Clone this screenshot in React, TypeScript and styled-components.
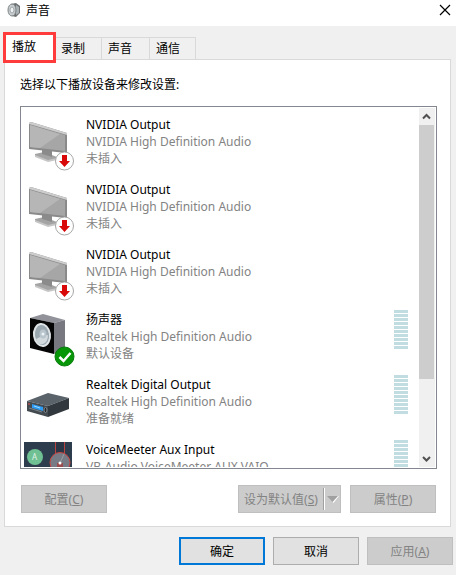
import React from "react";
import styled, { createGlobalStyle, css } from "styled-components";

const Global = createGlobalStyle`
  *, *::before, *::after { box-sizing: border-box; }
  body { margin: 0; background: #f0f0f0; }
  body, button {
    font-family: "Noto Sans", "Noto Sans CJK SC", sans-serif;
    font-size: 12px;
    line-height: 17px;
    color: #000;
  }
  button { margin: 0; padding: 0; }
  h1, p, ul { margin: 0; padding: 0; font: inherit; }
  svg { display: block; }
`;

const Dialog = styled.main`
  display: flex;
  flex-direction: column;
  min-height: 100vh;
  background: #f0f0f0;
`;

const TitleBar = styled.header`
  display: flex;
  align-items: center;
  gap: 5px;
  height: 26px;
  padding: 0 4px 6px 5px;
  background: #fff;
`;

const Title = styled.h1`
  flex: 1;
`;

const CloseButton = styled.button`
  display: grid;
  place-items: center;
  width: 14px;
  height: 14px;
  border: 0;
  background: none;
`;

const Tabs = styled.div`
  display: flex;
  align-items: flex-end;
  height: 33px;
  padding-left: 3px;
`;

const Tab = styled.button<{ $width: number }>`
  width: ${(p) => p.$width}px;
  height: 22px;
  padding-left: 6px;
  border: 1px solid #d9d9d9;
  border-width: 1px 0 0 1px;
  background: #f0f0f0;
  text-align: left;

  &:last-child {
    border-right-width: 1px;
  }

  &[aria-selected="true"] {
    position: relative;
    z-index: 1;
    height: 31px;
    margin: 0 -2px -4px 0;
    padding-bottom: 2px;
    border: 3px solid #ff3b3b;
    background: #fff;
  }
`;

const Panel = styled.section`
  display: flex;
  flex-direction: column;
  margin: 0 5px 0 4px;
  padding: 16px 13px 13px 15px;
  border: 1px solid #d9d9d9;
  background: #fff;
`;

const Prompt = styled.p`
  margin-bottom: 13px;
`;

const ListFrame = styled.div`
  display: flex;
  height: 363px;
  border: 1px solid #828790;
  padding-right: 1px;
  background: #fff;
`;

const DeviceList = styled.ul`
  flex: 1;
  min-width: 0;
  overflow: hidden;
  list-style: none;
  margin-bottom: 1px;
`;

const Device = styled.li`
  display: flex;
  align-items: flex-start;
  gap: 14px;
  height: 65px;
  padding: 9px 11px 0 3px;
`;

const DeviceIcon = styled.svg`
  flex: none;
  margin-top: 1px;
`;

const DeviceText = styled.div`
  flex: 1;
  min-width: 0;
  white-space: nowrap;
`;

const Detail = styled.p`
  color: #838383;
`;

const Meter = styled.div`
  flex: none;
  width: 14px;
  height: 39px;
  margin-top: -1px;
  background: repeating-linear-gradient(#c1dde2 0 3px, #fff 3px 4px);
`;

const ScrollBar = styled.div`
  display: flex;
  flex-direction: column;
  width: 16px;
  margin: 1px 0;
  background: #f0f0f0;
`;

const ScrollButton = styled.button`
  display: grid;
  place-items: center;
  width: 15px;
  height: 17px;
  border: 0;
  background: none;
`;

const Track = styled.div`
  flex: 1;
`;

const Thumb = styled.div`
  width: 15px;
  height: 78%;
  background: #cdcdcd;
`;

const Actions = styled.div`
  display: flex;
  gap: 9px;
  padding: 16px 1px 0;
`;

const Spacer = styled.div`
  flex: 1;
`;

const disabledLook = css`
  border: 1px solid #bfbfbf;
  background: #cccccc;
  color: #838383;
`;

const Button = styled.button<{ $primary?: boolean }>`
  width: 86px;
  height: 28px;
  border: ${(p) => (p.$primary ? "2px solid #0078d7" : "1px solid #adadad")};
  background: #e1e1e1;
  &:disabled { ${disabledLook} }
`;

const SplitButton = styled.div`
  display: flex;
  align-items: center;
  width: 103px;
  height: 28px;
  ${disabledLook}
`;

const SplitMain = styled.button`
  flex: 1;
  height: 22px;
  border: 0;
  border-right: 1px solid #a0a0a0;
  background: none;
  color: inherit;
`;

const SplitArrow = styled.button`
  display: grid;
  place-items: center;
  width: 16px;
  height: 22px;
  border: 0;
  border-left: 1px solid #fff;
  background: none;
`;

const Footer = styled.footer`
  display: flex;
  justify-content: flex-end;
  gap: 8px;
  padding: 10px 3px;
`;

type Kind = "monitor" | "speaker" | "receiver" | "mixer";

function Monitor() {
  return (
    <>
      <path d="M11 37 20 35 33 40 33 42 24 44 11 39Z" fill="#a4a4a4" />
      <path d="M11 38 24 43 33 41v2l-9 2L11 40Z" fill="#c6c6c6" />
      <path d="M18 32h10v8l-10-3Z" fill="#8b8b8b" />
      <path d="M5 6 7 5 43 16v19l-1 1L5 32Z" fill="#8a8a8a" />
      <path d="M5 6 7 5 43 16v2L5 7Z" fill="#cdcdcd" />
      <path d="M6 8 41 18v16L6 30Z" fill="#a6a6a6" />
      <path d="M6 8 36 17 16 31 6 30Z" fill="#b6b6b6" />
      <circle cx="40.5" cy="44" r="9" fill="#fff" stroke="#a7a7a7" />
      <path d="M38 38h5v6h3l-5.5 6-5.500-6h3Z" fill="#d90808" />
    </>
  );
}

function Speaker() {
  return (
    <>
      <path d="M6 6 19 2 41 8 30 11Z" fill="#92939a" />
      <path d="M30 11 41 8v29l-11 5Z" fill="#777880" />
      <path d="M6 6 30 11v31L6 36Z" fill="#050505" />
      <ellipse cx="18" cy="23" rx="9" ry="12" fill="#dfe4e6" transform="rotate(-8 18 23)" />
      <ellipse cx="18" cy="23" rx="7" ry="10" fill="#9ba8b0" transform="rotate(-8 18 23)" />
      <path d="M12 27Q13 33 19 32Q24 30 24 23L18 24Z" fill="#d3dadd" />
      <ellipse cx="19" cy="22" rx="3.500" ry="4.500" fill="#b9c5cc" />
      <circle cx="19" cy="22" r="1.500" fill="#eef4f7" />
      <circle cx="40.5" cy="44.5" r="9.500" fill="#079607" stroke="#087b0b" />
      <path d="m35.500 45 4 4 7-8" fill="none" stroke="#fff" strokeWidth="2.500" />
    </>
  );
}

function Receiver() {
  return (
    <>
      <path d="M3 24 24 16 45 21 24 29Z" fill="#5a636a" />
      <path d="M3 24 24 29v11L3 34Z" fill="#434b51" />
      <path d="M24 29 45 21v11l-21 8Z" fill="#31383e" />
      <path d="M8 27 19 30v4L8 31Z" fill="#2d9cf2" />
      <path d="m10 29 6 2" stroke="#9bd9ff" />
      <path d="M4 27h2" stroke="#e65252" />
      <path d="m5 31 13 4" stroke="#7b858c" />
      <ellipse cx="21.5" cy="33" rx="1.500" ry="2.500" fill="#23272a" stroke="#848d93" />
    </>
  );
}

const MixerLabel = styled.text`
  font: 8px "Noto Sans", sans-serif;
  fill: #e2f3e8;
`;

function Mixer() {
  return (
    <>
      <path d="M0 0h48v48H0Z" fill="#2e3d4d" />
      <path d="M31.500 0v26M40.500 0v26" stroke="#b7443f" />
      <path d="M32 0h8v25h-8Z" fill="#2a3646" />
      <circle cx="11" cy="15" r="8" fill="#6fc093" />
      <MixerLabel x="8" y="18">A</MixerLabel>
      <circle cx="36" cy="20.5" r="10" fill="#777b85" stroke="#c94743" />
      <path d="m36 21 4-9" stroke="#999da5" />
      <path d="M33 21h6v10h-6Z" fill="#984c50" />
      <circle cx="36" cy="21" r="1.500" fill="#fff" />
    </>
  );
}

const drawings: Record<Kind, () => React.JSX.Element> = {
  monitor: Monitor,
  speaker: Speaker,
  receiver: Receiver,
  mixer: Mixer,
};

const devices: { kind: Kind; name: string; driver: string; state?: string; meter?: boolean }[] = [
  { kind: "monitor", name: "NVIDIA Output", driver: "NVIDIA High Definition Audio", state: "未插入" },
  { kind: "monitor", name: "NVIDIA Output", driver: "NVIDIA High Definition Audio", state: "未插入" },
  { kind: "monitor", name: "NVIDIA Output", driver: "NVIDIA High Definition Audio", state: "未插入" },
  { kind: "speaker", name: "扬声器", driver: "Realtek High Definition Audio", state: "默认设备", meter: true },
  { kind: "receiver", name: "Realtek Digital Output", driver: "Realtek High Definition Audio", state: "准备就绪", meter: true },
  { kind: "mixer", name: "VoiceMeeter Aux Input", driver: "VB-Audio VoiceMeeter AUX VAIO", meter: true },
];

const tabs = [
  { label: "播放", width: 53 },
  { label: "录制", width: 47 },
  { label: "声音", width: 48 },
  { label: "通信", width: 47 },
];

export default function App() {
  return (
    <>
      <Global />
      <Dialog>
        <TitleBar>
          <svg width="16" height="16" viewBox="0 0 16 16" aria-hidden="true">
            <path d="M6 2 11 1l4 3v7l-4 4-4-1Z" fill="#6d7172" />
            <path d="m11 3 3 2v6l-3 2Z" fill="#aab1b4" />
            <ellipse cx="7" cy="8" rx="4" ry="6" fill="#c8cdcf" stroke="#7e8587" />
            <ellipse cx="7" cy="8" rx="2" ry="3" fill="#eef1f2" stroke="#a0a7aa" />
          </svg>
          <Title>声音</Title>
          <CloseButton aria-label="关闭">
            <svg width="12" height="12" viewBox="0 0 12 12" stroke="#000" strokeWidth="1.200">
              <path d="m1 1 10 10M11 1 1 11" />
            </svg>
          </CloseButton>
        </TitleBar>
        <Tabs role="tablist">
          {tabs.map((tab, i) => (
            <Tab key={tab.label} role="tab" aria-selected={i === 0} $width={tab.width}>
              {tab.label}
            </Tab>
          ))}
        </Tabs>
        <Panel role="tabpanel" aria-label="播放">
          <Prompt>选择以下播放设备来修改设置:</Prompt>
          <ListFrame>
            <DeviceList>
              {devices.map((device, i) => {
                const Drawing = drawings[device.kind];
                return (
                  <Device key={i}>
                    <DeviceIcon width="48" height="54" viewBox="0 0 48 54" overflow="visible" aria-hidden="true">
                      <Drawing />
                    </DeviceIcon>
                    <DeviceText>
                      <p>{device.name}</p>
                      <Detail>{device.driver}</Detail>
                      {device.state && <Detail>{device.state}</Detail>}
                    </DeviceText>
                    {device.meter && <Meter />}
                  </Device>
                );
              })}
            </DeviceList>
            <ScrollBar>
              <ScrollButton aria-label="向上滚动">
                <svg width="9" height="7" viewBox="0 0 9 7" fill="none" stroke="#505050" strokeWidth="2">
                  <path d="m1 5.500 3.500-3.500L8 5.500" />
                </svg>
              </ScrollButton>
              <Track><Thumb /></Track>
              <ScrollButton aria-label="向下滚动">
                <svg width="9" height="7" viewBox="0 0 9 7" fill="none" stroke="#505050" strokeWidth="2">
                  <path d="m1 2 3.500 3.500L8 2" />
                </svg>
              </ScrollButton>
            </ScrollBar>
          </ListFrame>
          <Actions>
            <Button disabled>配置(<u>C</u>)</Button>
            <Spacer />
            <SplitButton>
              <SplitMain disabled>设为默认值(<u>S</u>)</SplitMain>
              <SplitArrow disabled aria-label="更多选项">
                <svg width="12" height="8" viewBox="0 0 12 8">
                  <path d="M1 1h11L6.500 8 5 6Z" fill="#fff" />
                  <path d="M0 1h11L5.500 7Z" fill="#a0a0a0" />
                </svg>
              </SplitArrow>
            </SplitButton>
            <Button disabled>属性(<u>P</u>)</Button>
          </Actions>
        </Panel>
        <Footer>
          <Button $primary>确定</Button>
          <Button>取消</Button>
          <Button disabled>应用(<u>A</u>)</Button>
        </Footer>
      </Dialog>
    </>
  );
}
